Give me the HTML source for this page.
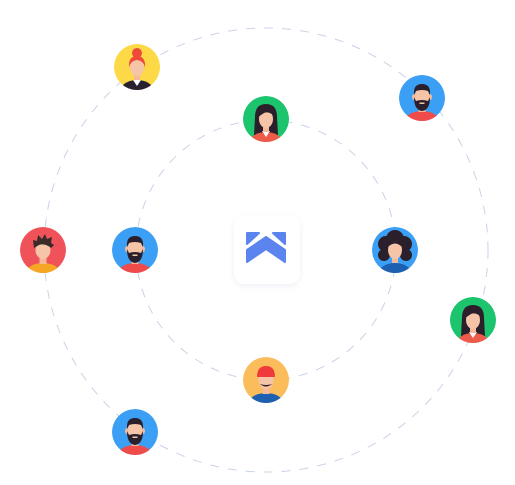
<!DOCTYPE html>
<html><head><meta charset="utf-8"><style>
html,body{margin:0;padding:0;background:#fff;width:515px;height:485px;overflow:hidden}
</style></head><body>
<svg width="515" height="485" viewBox="0 0 515 485" xmlns="http://www.w3.org/2000/svg">
<defs>
<clipPath id="c"><circle cx="0" cy="0" r="23"/></clipPath>
<filter id="sh" x="-30%" y="-30%" width="160%" height="160%"><feDropShadow dx="0" dy="2" stdDeviation="3" flood-color="#8a9ab8" flood-opacity="0.15"/></filter>
<g id="man">
<ellipse cx="0" cy="23" rx="17" ry="10" fill="#ef4b4b"/>
<rect x="-3.5" y="5" width="7" height="9" fill="#f3b99a"/>
<ellipse cx="-8" cy="-1" rx="2" ry="3" fill="#f3b99a"/>
<ellipse cx="8" cy="-1" rx="2" ry="3" fill="#f3b99a"/>
<ellipse cx="0" cy="-1" rx="7.5" ry="9.5" fill="#f6c5a7"/>
<path d="M-8 -3 Q-9 -14 0 -14 Q9 -14 8 -3 L6 -7 Q0 -9 -6 -7Z" fill="#2a1f2b"/>
<path d="M-8 -1 Q-8 12 0 13 Q8 12 8 -1 L6 3 Q0 1 -6 3Z" fill="#2a1f2b"/>
<rect x="-2.5" y="4.5" width="5" height="1.5" fill="#f6c5a7"/>
</g>
<g id="woman">
<path d="M-11 -2 Q-11 -15 0 -15 Q11 -15 11 -2 L12 16 L-12 16Z" fill="#2a1f2b"/>
<ellipse cx="0" cy="23" rx="16" ry="10" fill="#ef5b4b"/>
<path d="M-4 12 L0 18 L4 12Z" fill="#fff"/>
<rect x="-3" y="5" width="6" height="8" fill="#f3b99a"/>
<ellipse cx="0" cy="0" rx="7" ry="9" fill="#f6c5a7"/>
<path d="M-8 -2 Q-7 -11 0 -11 Q7 -11 8 -3 Q3 -8 -2 -6 Q-5 -4 -8 -2Z" fill="#2a1f2b"/>
</g>
</defs>

<circle cx="266" cy="250" r="222" fill="none" stroke="#c9d3e6" stroke-width="1" stroke-dasharray="9 9"/>
<circle cx="266" cy="250" r="130" fill="none" stroke="#c9d3e6" stroke-width="1" stroke-dasharray="9 9"/>

<rect x="234" y="216" width="66" height="68" rx="10" fill="#fff" filter="url(#sh)"/>
<path d="M247 233 L259 233 L247 244 Z M285 233 L273 233 L285 244 Z" fill="#5b84ee" stroke="#5b84ee" stroke-width="2" stroke-linejoin="round"/>
<path d="M247 250 L266 237 L285 250 L285 262 L266 249 L247 262 Z" fill="#5b84ee" stroke="#5b84ee" stroke-width="2" stroke-linejoin="round"/>

<g transform="translate(137,67)" clip-path="url(#c)">
<circle r="23" fill="#fdd847"/>
<ellipse cx="0" cy="23" rx="16" ry="10" fill="#2b2230"/>
<path d="M-4 13 L0 19 L4 13Z" fill="#fff"/>
<rect x="-3" y="5" width="6" height="8" fill="#f3b99a"/>
<ellipse cx="0" cy="0" rx="7" ry="9" fill="#f6c5a7"/>
<path d="M-8 1 Q-9 -11 0 -11 Q9 -11 8 1 Q7 -6 0 -7 Q-7 -6 -8 1Z" fill="#ef4b3a"/>
<circle cx="0" cy="-14" r="5" fill="#ef4b3a"/>
</g>
<g transform="translate(266,119)" clip-path="url(#c)"><circle r="23" fill="#1cc46e"/><use href="#woman"/></g>
<g transform="translate(422,98)" clip-path="url(#c)"><circle r="23" fill="#3ba0f5"/><use href="#man"/></g>
<g transform="translate(43,250)" clip-path="url(#c)">
<circle r="23" fill="#f0525a"/>
<ellipse cx="0" cy="23" rx="17" ry="10" fill="#f5a623"/>
<rect x="-3.5" y="5" width="7" height="9" fill="#f3b99a"/>
<ellipse cx="0" cy="0" rx="7.5" ry="9" fill="#f6c5a7"/>
<path d="M-9 -2 L-10 -10 L-6 -9 L-5 -15 L-1 -11 L2 -16 L4 -11 L9 -13 L8 -7 L11 -5 L8 -2 Q2 -7 -4 -5Z" fill="#3a2a2a"/>
</g>
<g transform="translate(135,250)" clip-path="url(#c)"><circle r="23" fill="#3ba0f5"/><use href="#man"/></g>
<g transform="translate(395,250)" clip-path="url(#c)">
<circle r="23" fill="#3ba0f5"/>
<circle cx="-9" cy="-6" r="8" fill="#2a1f2b"/><circle cx="9" cy="-6" r="8" fill="#2a1f2b"/>
<circle cx="0" cy="-11" r="9" fill="#2a1f2b"/><circle cx="-11" cy="5" r="6" fill="#2a1f2b"/><circle cx="11" cy="5" r="6" fill="#2a1f2b"/>
<ellipse cx="0" cy="23" rx="16" ry="10" fill="#1d5fb0"/>
<rect x="-3" y="5" width="6" height="8" fill="#f3b99a"/>
<ellipse cx="0" cy="0" rx="7" ry="9" fill="#f6c5a7"/>
<path d="M-7 -3 Q0 -10 7 -3 Q6 -9 0 -9 Q-6 -9 -7 -3Z" fill="#2a1f2b"/>
</g>
<g transform="translate(473,320)" clip-path="url(#c)"><circle r="23" fill="#1cc46e"/><use href="#woman"/></g>
<g transform="translate(266,380)" clip-path="url(#c)">
<circle r="23" fill="#fbbd5b"/>
<ellipse cx="0" cy="23" rx="17" ry="10" fill="#1d5fb0"/>
<rect x="-3.5" y="5" width="7" height="9" fill="#f3b99a"/>
<ellipse cx="0" cy="0" rx="7.5" ry="9" fill="#f6c5a7"/>
<path d="M-9 -3 Q-9 -14 0 -14 Q9 -14 9 -3Z" fill="#ef3b3b"/>
<path d="M-6 4 Q0 9 6 4 Q0 6 -6 4Z" fill="#2a1f2b"/>
</g>
<g transform="translate(135,432)" clip-path="url(#c)"><circle r="23" fill="#3ba0f5"/><use href="#man"/></g>
</svg>
</body></html>
